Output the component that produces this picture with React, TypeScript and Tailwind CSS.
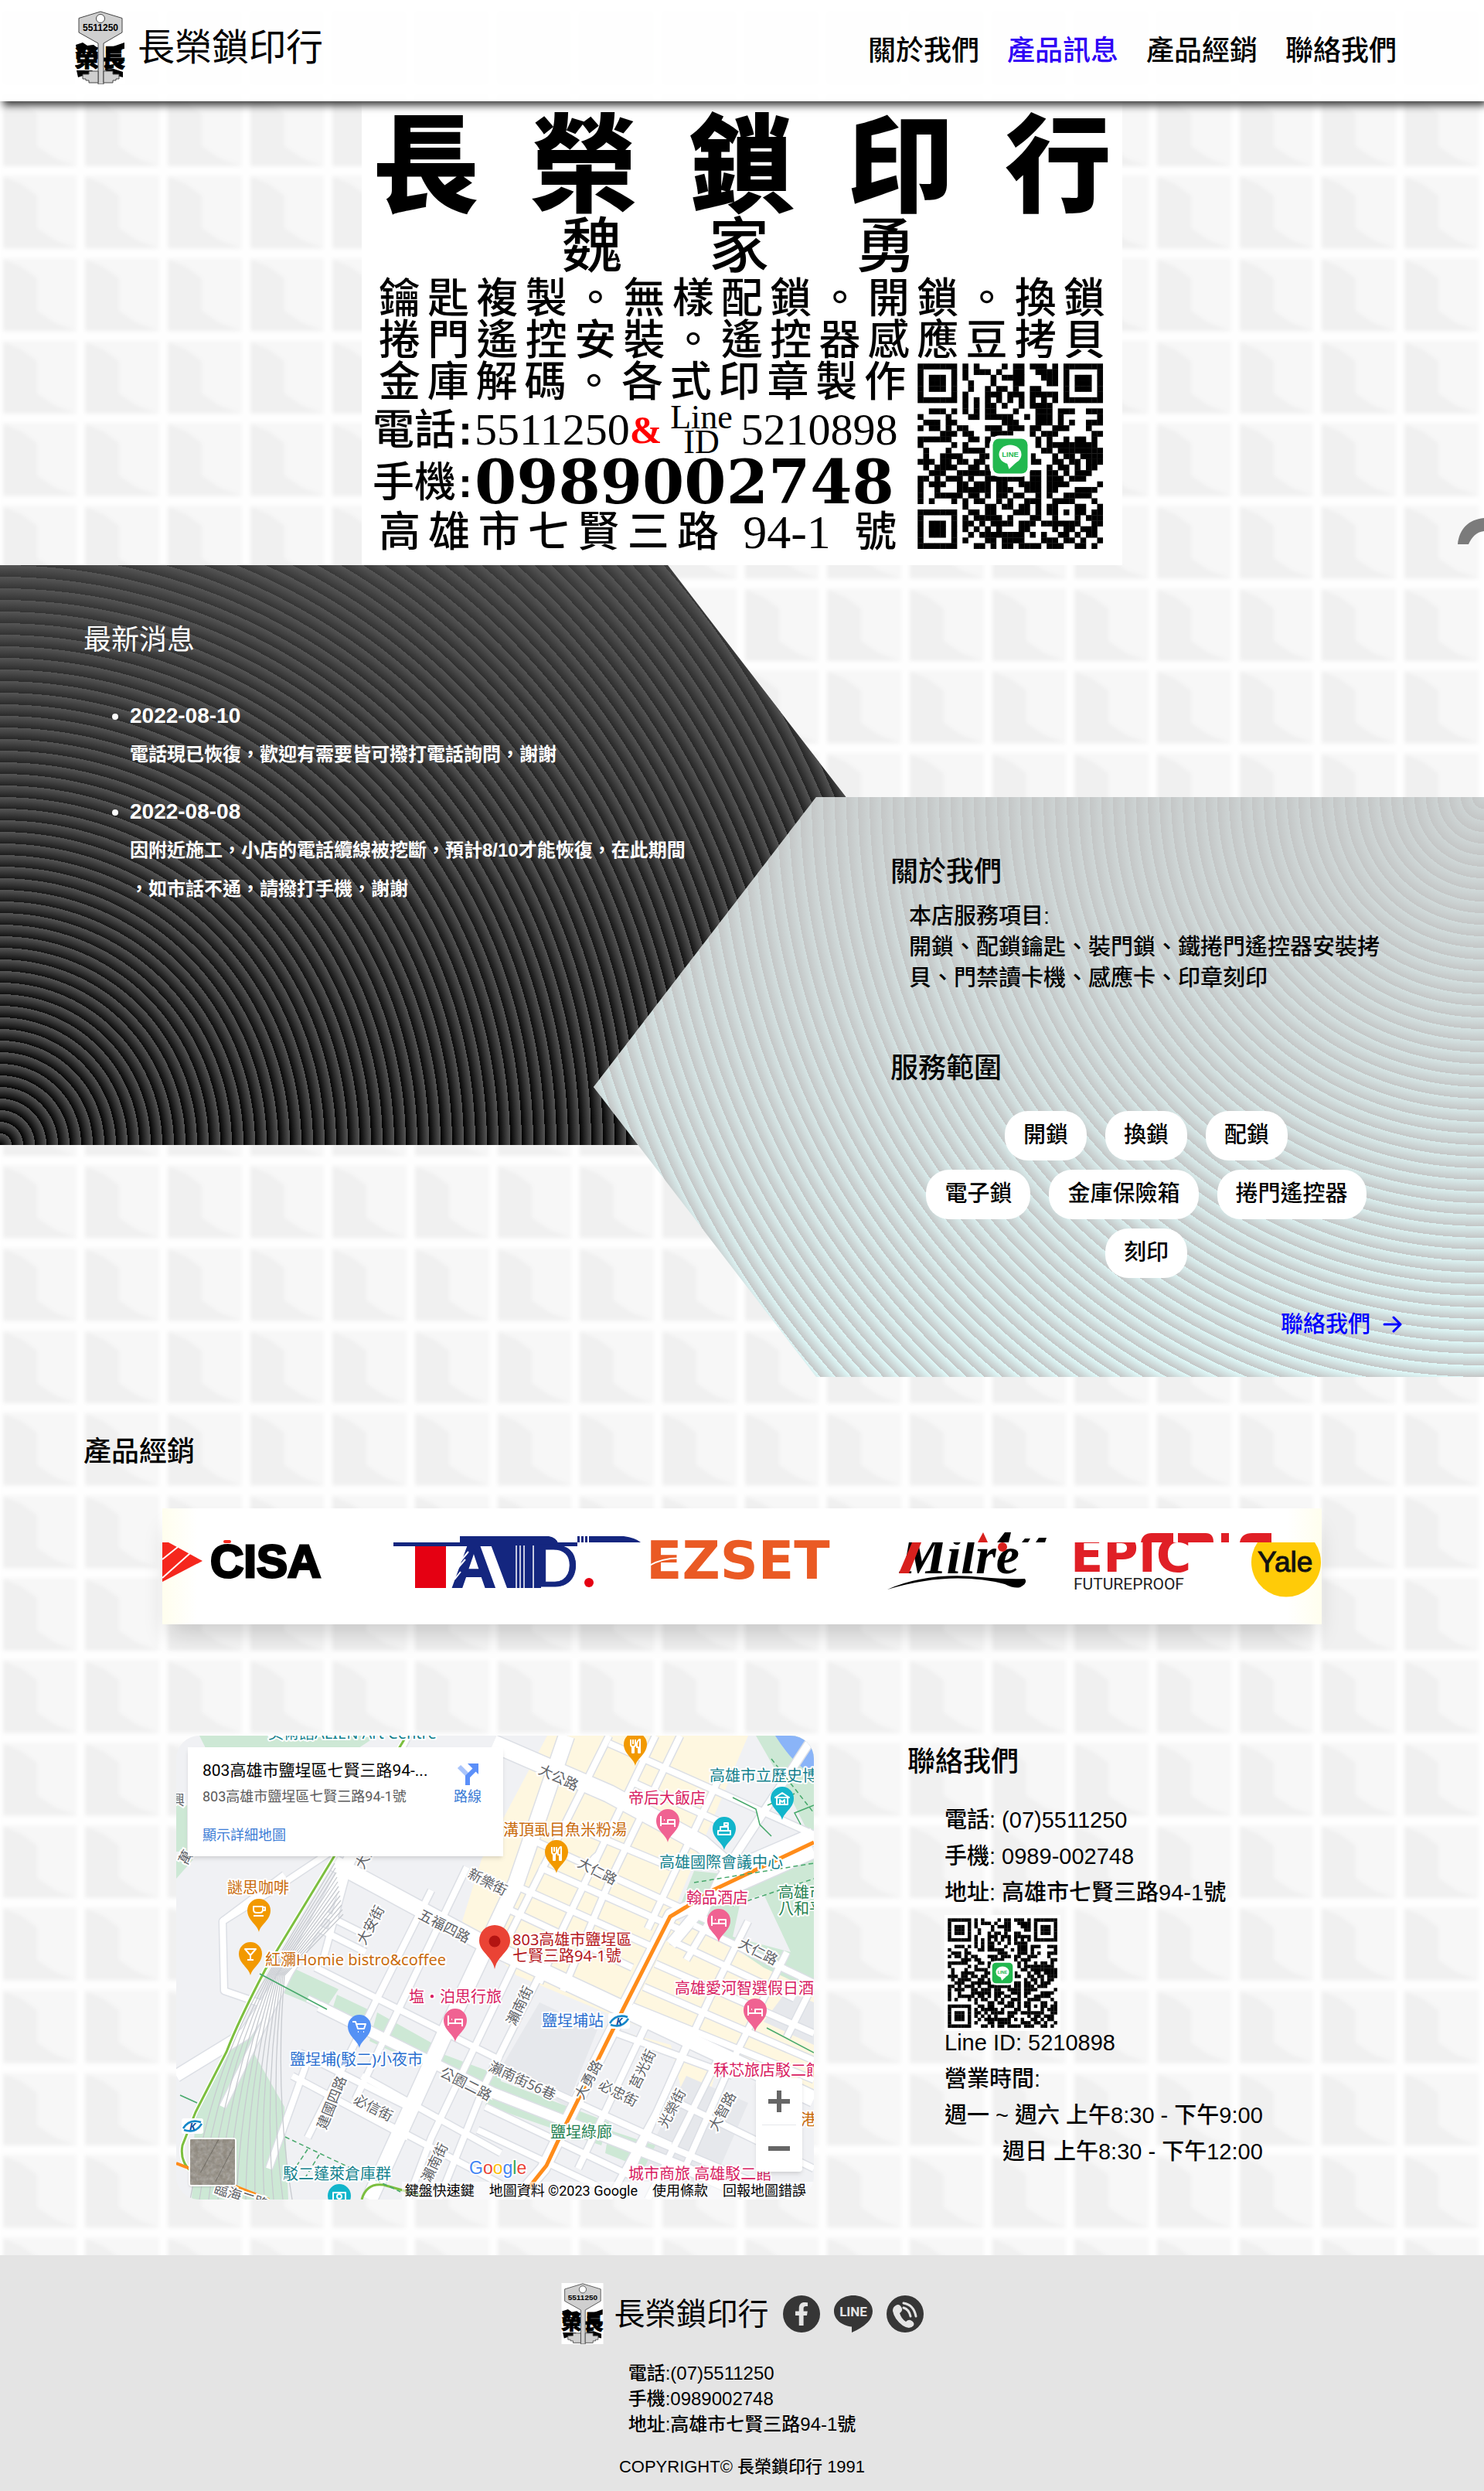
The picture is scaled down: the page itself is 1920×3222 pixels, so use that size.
import React from "react";
import { FaFacebookF } from "react-icons/fa";

const QR_ROWS = [
  "111111101010000101101110101111111",
  "100000101011101001100111101000001",
  "101110101000010111100011101011101",
  "101110100100010001100001101011101",
  "101110100100101101001100001011101",
  "100000101000111011101111101000001",
  "111111101010101010101010101111111",
  "000000001010110100101111000000000",
  "001110101010110001000111011100111",
  "100001000110111110010111010000001",
  "011101100000000111000111010100111",
  "101101011000111011101100111000100",
  "000011101100011110001011100000011",
  "111111000110100000000101001011010",
  "100000101000100000000101111111110",
  "010001001111000000000011011111111",
  "010011110001100000001000101101111",
  "111011011011000000001100110110111",
  "010111100110100000000001011010110",
  "001110011111100000001101101011100",
  "110101110100111111101101110111000",
  "101110011011101100111101111000001",
  "100100011111101110011101100011110",
  "100111110110101101100101001111100",
  "101000101011001010011100111100010",
  "000000001000110110110101100011001",
  "111111100110110001110101101011011",
  "100000101011111010001100100010111",
  "101110101101011110111011111110011",
  "101110101010101000110000101101110",
  "101110100101111111101010011010110",
  "100000101000110111100011101101001",
  "111111100011010110111101110011010",
];

function QrCode({ className }: { className: string }) {
  return (
    <svg viewBox="-1 -1 35 35" className={className} role="img" aria-label="LINE QR code">
      <rect x="-1" y="-1" width="35" height="35" fill="#fff" />
      {QR_ROWS.map((row, y) =>
        row.split("").map((bit, x) =>
          bit === "1" ? <rect key={`${x}-${y}`} x={x} y={y} width="1.04" height="1.04" fill="#000" /> : null
        )
      )}
      <rect x="12.8" y="12.8" width="7.4" height="7.4" rx="1.8" fill="#fff" />
      <rect x="13.4" y="13.4" width="6.2" height="6.2" rx="1.1" fill="#22b84f" />
      <ellipse cx="16.5" cy="16.2" rx="2" ry="1.7" fill="#fff" />
      <path d="M15.9 17.6h1.7l-1.3 1.2z" fill="#fff" />
      <text x="16.5" y="16.7" textAnchor="middle" fontSize="1.3" fontWeight="700" fill="#22b84f">LINE</text>
    </svg>
  );
}

function KeyLogo({ className }: { className: string }) {
  return (
    <svg viewBox="0 0 65 95" className={className} role="img" aria-label="長榮鎖印行">
      <rect width="65" height="95" fill="#fff" />
      <g fill="#000" stroke="#000" strokeWidth="1" fontWeight="900" fontSize="31">
        <text x="0" y="72">榮</text>
        <text x="34" y="72">長</text>
      </g>
      <path d="M1 44l9-3 6 4 8-1 4 3v3H2zM64 41l-20 7-4 4v3l24-6zM2 77h20l6 5-8-1-16 5zM38 76l8 6 16 4v-7l-12-4z" fill="#000" />
      <path d="M33 1 61 9.500V28L37 42V95H30V42L5 28V9.500z" fill="#cfcfcf" stroke="#444" strokeWidth="1" />
      <path d="M30 78H18v4h-8v6h4v2h4v3h12zM37 78h12v4h8v6h-4v2h-4v3H37z" fill="#cfcfcf" stroke="#444" strokeWidth="1" />
      <circle cx="33" cy="10" r="5.500" fill="#fff" stroke="#444" />
      <text x="33" y="26" textAnchor="middle" fontSize="12" fontWeight="700">5511250</text>
    </svg>
  );
}

function TileBackground() {
  const xs = [-2, 104, 211];
  const ys = [8, 115, 221];
  return (
    <svg className="absolute inset-0 -z-10 h-full w-full" aria-hidden="true">
      <defs>
        <filter id="soft" x="0" y="0" width="1" height="1">
          <feGaussianBlur stdDeviation="2.500" />
        </filter>
        <pattern id="tiles" width="320" height="320" patternUnits="userSpaceOnUse">
          <rect width="320" height="320" fill="#f7f7f7" />
          {[-320, 0].map((oy) => ys.map((y) => xs.map((x) => (
            <g key={`${oy}${x}-${y}`} transform={`translate(${x} ${y + oy})`}>
              <path d="M6 7 30 17 50 32V74L74 90 102 100H6z" fill="#f0f0f0" />
              <rect x="-5" y="0" width="11" height="107" fill="#fefefe" />
              <rect x="0" y="-6" width="107" height="12" fill="#fefefe" />
            </g>
          ))))}
          <rect x="313" y="0" width="11" height="320" fill="#fefefe" />
        </pattern>
      </defs>
      <rect width="100%" height="100%" fill="url(#tiles)" filter="url(#soft)" />
    </svg>
  );
}

const NAV = [
  { label: "關於我們", active: false },
  { label: "產品訊息", active: true },
  { label: "產品經銷", active: false },
  { label: "聯絡我們", active: false },
];

function Header() {
  return (
    <header className="relative z-20 flex h-[131px] items-center justify-between bg-white/90 px-[97px] pb-2 shadow-[4px_5px_10px_#333]">
      <a href="#top" className="flex items-center gap-4">
        <KeyLogo className="h-[95px] w-[65px]" />
        <span className="text-5xl font-normal">長榮鎖印行</span>
      </a>
      <nav className="flex gap-9 pt-2 pr-4 text-4xl font-medium">
        {NAV.map((n) => (
          <a key={n.label} href="#top" className={n.active ? "text-[#2e00f5]" : "text-black"}>{n.label}</a>
        ))}
      </nav>
    </header>
  );
}

function Banner() {
  const spread = "text-justify [text-align-last:justify]";
  return (
    <section className="relative">
      <div className="relative mx-auto h-[600px] w-[984px] bg-white px-[22px] pt-1 text-black">
        <div className={`-mx-2 h-[144px] pt-2 text-[138px] leading-[144px] font-black ${spread}`}>長榮鎖印行</div>
        <div className="flex h-[80px] justify-center gap-[112px] pr-2 text-[78px] leading-[80px] font-medium">
          <span>魏</span><span>家</span><span>勇</span>
        </div>
        <div className={`h-[54px] text-[54px] leading-[54px] font-medium ${spread}`}>鑰匙複製。無樣配鎖。開鎖。換鎖</div>
        <div className={`h-[54px] text-[54px] leading-[54px] font-medium ${spread}`}>捲門遙控安裝。遙控器感應豆拷貝</div>
        <div className="flex justify-between">
          <div className="w-[682px]">
            <div className={`h-[54px] text-[54px] leading-[54px] font-medium ${spread}`}>金庫解碼。各式印章製作</div>
            <div className="-ml-2 flex h-[70px] items-center text-[54px] leading-none">
              <span className="font-medium">電話</span>
              <span className="w-[24px] text-center font-bold">:</span>
              <span className="font-[Liberation_Serif] text-[58px]">5511250</span>
              <span className="font-[Liberation_Serif] text-[50px] font-bold text-[#f00]">&amp;</span>
              <span className="flex w-[102px] flex-col items-center font-[Liberation_Serif] text-[44px] leading-[32px]">
                <span>Line</span><span>ID</span>
              </span>
              <span className="font-[Liberation_Serif] text-[58px]">5210898</span>
            </div>
            <div className="-ml-2 flex h-[66px] items-center text-[54px] leading-none">
              <span className="font-medium">手機</span>
              <span className="w-[24px] text-center font-bold">:</span>
              <span className="font-[DejaVu_Serif] text-[78px] font-bold">0989002748</span>
            </div>
            <div className="flex h-[62px] items-center justify-between pr-3 text-[54px] leading-none font-medium">
              <span className={`w-[440px] ${spread}`}>高雄市七賢三路</span>
              <span className="font-[Liberation_Serif] text-[62px] font-normal">94-1</span>
              <span>號</span>
            </div>
          </div>
          <QrCode className="-mt-1 -mr-1 h-[254px] w-[254px]" />
        </div>
      </div>
      <svg viewBox="0 0 34 34" className="absolute right-0 bottom-[27px] h-[34px] w-[34px]" aria-hidden="true">
        <path d="M0 34C2 14 14 2 34 0v17C24 18 18 25 14 34z" fill="#7b7b7b" />
      </svg>
    </section>
  );
}

const NEWS = [
  { date: "2022-08-10", text: "電話現已恢復，歡迎有需要皆可撥打電話詢問，謝謝" },
  { date: "2022-08-08", text: "因附近施工，小店的電話纜線被挖斷，預計8/10才能恢復，在此期間，如市話不通，請撥打手機，謝謝" },
];

function News() {
  return (
    <section className="h-[750px] w-3/5 pt-[70px] pl-[108px] text-white [background-image:repeating-radial-gradient(circle_at_0_100%,transparent_0,#555_15px),linear-gradient(#383838,#000)] [clip-path:polygon(0_0,75%_0,100%_50%,75%_100%,0_100%)]">
      <h2 className="text-4xl leading-[54px] font-normal">最新消息</h2>
      <ul className="mt-[46px] w-[784px] list-disc pl-[60px]">
        {NEWS.map((n) => (
          <li key={n.date} className="mb-6 text-[28px] leading-[50px] font-bold">
            <h3>{n.date}</h3>
            <p className="text-2xl leading-[50px] [line-break:anywhere]">{n.text}</p>
          </li>
        ))}
      </ul>
    </section>
  );
}

const SERVICES = [["開鎖", "換鎖", "配鎖"], ["電子鎖", "金庫保險箱", "捲門遙控器"], ["刻印"]];

function About() {
  return (
    <section className="-mt-[450px] ml-auto flex h-[750px] w-3/5 flex-col pt-[70px] pr-[106px] pl-[384px] text-black [background-image:repeating-radial-gradient(circle_at_100%_0,transparent_0,#c4c6c6_15px),linear-gradient(#cdd3d3,#dffafa)] [clip-path:polygon(25%_0,100%_0,100%_100%,25%_100%,0_50%)]">
      <h2 className="text-4xl leading-[54px] font-medium">關於我們</h2>
      <p className="w-[640px] pt-[10px] pl-6 text-[29px] leading-[40px] font-medium">
        本店服務項目:<br />開鎖、配鎖鑰匙、裝門鎖、鐵捲門遙控器安裝拷貝、門禁讀卡機、感應卡、印章刻印
      </p>
      <h2 className="mt-[70px] text-4xl leading-[54px] font-medium">服務範圍</h2>
      <div className="mt-7 flex flex-col gap-3">
        {SERVICES.map((row) => (
          <ul key={row[0]} className="flex justify-center gap-6">
            {row.map((s) => (
              <li key={s} className="flex h-16 items-center rounded-[30px] bg-white px-6 text-[29px] font-medium">{s}</li>
            ))}
          </ul>
        ))}
      </div>
      <a href="#contact" className="mt-[38px] flex items-center gap-4 self-end text-[29px] leading-[44px] font-medium text-[#0000ff]">
        聯絡我們
        <svg viewBox="0 0 25 22" className="h-[22px] w-[25px]" fill="none" stroke="currentColor" strokeWidth="3" strokeLinecap="round" strokeLinejoin="round" aria-hidden="true">
          <path d="M2 11h21M14 2l9 9-9 9" />
        </svg>
      </a>
    </section>
  );
}

function Brands() {
  return (
    <section className="pt-[70px] pb-[144px]">
      <h2 className="pl-[108px] text-4xl leading-[54px] font-medium text-black">產品經銷</h2>
      <div className="mx-auto mt-[46px] h-[150px] w-[1500px] max-w-full bg-[linear-gradient(90deg,#fffeee,#fff_3%,#fff_97%,#fffeee)] shadow-[0_20px_30px_-8px_rgba(0,0,0,.18)]">
        <svg viewBox="0 0 1500 150" className="h-full w-full" role="img" aria-label="CISA TAID EZSET Milre EPIC Yale">
          <path d="M0 44h8L52 68 0 95z" fill="#f5271d" />
          <path d="M0 66 20 50M0 90 36 58" stroke="#fff" strokeWidth="2" />
          <text x="62" y="89" fontSize="60" fontWeight="700" fontFamily="Liberation Sans" stroke="#000" strokeWidth="3">CISA</text>
          <rect x="79" y="41" width="10" height="4" rx="2" fill="#f5271d" />

          <path d="M299 44H537V49H299z" fill="#14267f" />
          <path d="M385 45v-9H500q10 2 12 9z" fill="#14267f" />
          <path d="M537 36h60q15 2 22 8h-82z" fill="#14267f" />
          <path d="M541 36v8M546 36v8M551 36v8" stroke="#fff" strokeWidth="2" />
          <rect x="327" y="49" width="40" height="54" fill="#e50012" />
          <text x="374" y="102" fontSize="80" fontWeight="700" fontFamily="Liberation Sans" fill="#14267f" stroke="#14267f" strokeWidth="2">A</text>
          <path d="M378 92 386 82M380 80 392 66M386 68 396 56" stroke="#fff" strokeWidth="2" />
          <text x="482" y="101" fontSize="78" fontFamily="Liberation Sans" fill="#14267f" stroke="#14267f">D</text>
          <path d="M425 47H490V103H446z" fill="#14267f" />
          <path d="M458 48v55M463 48v55M468 48v55M480 48v55" stroke="#fff" strokeWidth="1.500" />
          <circle cx="552" cy="96" r="6" fill="#e50012" />

          <text x="626" y="91" fontSize="68" fontWeight="700" fontFamily="DejaVu Sans" fill="#ea5a24">EZSET</text>
          <path d="M630 74q20-12 50-9" fill="none" stroke="#fff" strokeWidth="2" />

          <text x="954" y="84" fontSize="68" fontWeight="700" fontStyle="italic" fontFamily="Liberation Serif">Milre</text>
          <path d="M953 84 970 44h12L966 84z" fill="#d8201d" />
          <path d="M938 105Q990 82 1060 89q34 3 56 2 4 6-6 11-8 2-20-4-70-18-152 7z" />
          <rect x="950" y="30" width="180" height="14" fill="#fff" />
          <circle cx="1087" cy="50" r="6" fill="#d8201d" />
          <path d="M1055 44 1062 31l6 13z" fill="#d8201d" />
          <path d="M1080 44 1090 31h8l-3 13zM1112 44l4-5h7l-3 5zM1130 44l4-6h10l-2 6z" />

          <text x="1175" y="82" fontSize="62" fontWeight="700" fontFamily="DejaVu Sans" fill="#e01f26">EPIC</text>
          <rect x="1170" y="30" width="190" height="14" fill="#fff" />
          <path d="M1266 44q2-12 14-12h28v12zM1314 32h36q10 0 10 12h-46zM1370 32h10v12h-10zM1394 44q2-12 16-12h25v12z" fill="#e01f26" />
          <text x="1179" y="105" fontSize="21" fontFamily="Roboto" fill="#222">FUTUREPROOF</text>
          <path d="M1417 44h74a45 45 0 1 1-74 0z" fill="#ffcb08" />
          <text x="1417" y="82" fontSize="37" fontFamily="Liberation Sans" fill="#111" stroke="#111" strokeWidth="1">Yale</text>
        </svg>
      </div>
    </section>
  );
}

type PinKind = "food" | "bed" | "cup" | "bar" | "cart" | "civic" | "museum" | "camera";
const PIN_ART: Record<PinKind, string> = {
  food: "M-6-34v6q0 3 2 3v8h2v-8q2 0 2-3v-6M-3-34v6M5-34q-4 3-3 10h2v7h2v-17z",
  bed: "M-9-34v13M-9-24H9v4M9-24v-5H0v5M-5-29h1",
  cup: "M-7-33H5v4q0 4-4 4h-4q-4 0-4-4zM5-32h3v4H5M-7-21H6",
  bar: "M-7-34H7L0-26zM0-26v6M-4-20h8",
  cart: "M-9-34h4l3 9H6l2-6H-4M-2-21h1M5-21h1",
  civic: "M-8-20v-5h16v5zM-5-25v-5H5v5M0-30v-5h5v3H0",
  museum: "M-9-29 0-35 9-29zM-7-28v8H7v-8M-3-21v-5l3 3 3-3v5",
  camera: "M-8-32H8v11H-8zM-3-27a3 3 0 1 0 6 0 3 3 0 1 0-6 0",
};
const PINS: { x: number; y: number; c: string; k: PinKind }[] = [
  { x: 107, y: 254, c: "#f29900", k: "cup" },
  { x: 96, y: 310, c: "#f29900", k: "bar" },
  { x: 237, y: 404, c: "#5491f5", k: "cart" },
  { x: 361, y: 396, c: "#f06292", k: "bed" },
  { x: 211, y: 623, c: "#12b5cb", k: "camera" },
  { x: 594, y: 39, c: "#f29900", k: "food" },
  { x: 492, y: 178, c: "#f29900", k: "food" },
  { x: 636, y: 138, c: "#f06292", k: "bed" },
  { x: 709, y: 148, c: "#12b5cb", k: "civic" },
  { x: 784, y: 109, c: "#12b5cb", k: "museum" },
  { x: 702, y: 267, c: "#f06292", k: "bed" },
  { x: 749, y: 383, c: "#f06292", k: "bed" },
];
const ORANGE = "#c96b0b", PINK = "#d81b60", TEAL = "#12808c", BLUE = "#2a6fd0", GREEN = "#1f8050", RED = "#b3151a";
const PLACES: [string, number, number, string][] = [
  ["美術館ALIEN Art Centre", 119, 4, TEAL],
  ["謎思咖啡", 66, 204, ORANGE],
  ["紅瀰Homie bistro&coffee", 115, 297, ORANGE],
  ["塩・泊思行旅", 301, 345, PINK],
  ["鹽埕埔(駁二)小夜市", 147, 426, BLUE],
  ["駁二蓬萊倉庫群", 138, 574, TEAL],
  ["溝頂虱目魚米粉湯", 423, 129, ORANGE],
  ["帝后大飯店", 585, 88, PINK],
  ["高雄市立歷史博物館", 690, 59, TEAL],
  ["高雄國際會議中心", 625, 171, TEAL],
  ["翰品酒店", 660, 217, PINK],
  ["高雄市", 779, 210, GREEN],
  ["八和平", 779, 231, GREEN],
  ["803高雄市鹽埕區", 435, 271, RED],
  ["七賢三路94-1號", 435, 292, RED],
  ["高雄愛河智選假日酒店", 645, 334, PINK],
  ["鹽埕埔站", 473, 376, BLUE],
  ["秝芯旅店駁二館", 695, 440, PINK],
  ["鹽埕綠廊", 484, 520, GREEN],
  ["城市商旅 高雄駁二館", 585, 574, PINK],
  ["港區", 808, 504, ORANGE],
];
const STREETS: [string, number, number, number][] = [
  ["大公路", 492, 60, 25], ["大仁路", 542, 181, 27], ["大仁路", 750, 285, 27], ["新樂街", 400, 195, 27],
  ["五福四路", 344, 252, 27], ["大安街", 257, 248, -62], ["大安街", 255, 150, -62], ["瀨南街", 450, 352, -64],
  ["瀨南街56巷", 445, 452, 25], ["大勇路", 539, 448, -62], ["必忠街", 569, 468, 27], ["莒光街", 609, 434, -64],
  ["光榮街", 647, 485, -62], ["大智路", 712, 489, -62], ["公園二路", 372, 456, 27], ["必信街", 252, 487, 27],
  ["建國四路", 207, 477, -68], ["瀨南街", 340, 555, -64], ["萬", 18, 160, -62], ["興", 2, 90, 0], ["臨海二路", 82, 602, 18],
];
const MINOR = [
  "M300 0 60 480", "M228 150 190 290M170 420 120 560", "M330 200 170 520", "M376 170 232 470", "M440 290 330 520 300 600",
  "M470 310 400 450 340 600", "M560 0 430 260", "M620 0 500 250 470 320", "M652 0 560 190 500 330", "M700 60 610 250",
  "M740 240 690 340 620 490 560 600", "M790 280 720 420 640 600", "M610 370 520 560", "M660 400 590 560", "M700 420 610 600",
  "M560 10 830 130", "M590 60 700 110", "M520 120 640 170", "M450 130 690 240", "M470 170 650 250", "M430 190 620 275",
  "M420 220 590 300", "M640 265 800 340", "M620 295 825 385", "M605 325 825 420", "M590 350 825 445", "M570 385 720 440",
  "M180 300 420 420", "M170 340 400 455", "M160 410 300 480", "M150 440 300 520", "M240 440 420 540", "M230 480 420 580",
  "M420 430 640 530", "M400 480 600 575", "M390 510 560 590", "M640 470 825 560", "M610 520 800 600", "M140 180 60 240 62 330 120 350",
  "M60 240 140 190 200 150", "M670 245 825 320 790 390", "M660 290 690 240", "M545 155q-16 12 4 20", "M190 230 250 260M185 250 245 280",
];
const MAJOR: [string, number][] = [
  ["M205 165 400 270 575 352 825 470", 20], ["M410 10 560 75 680 140 720 175 825 130", 22], ["M505 0 440 190 350 380 250 600", 20],
  ["M825 150 640 232 575 360 475 560 440 600", 16], ["M185 350 410 462 650 556 750 600", 13], ["M0 440 90 385 160 280 230 150", 15],
  ["M720 175 640 270", 14], ["M825 0 700 190 680 235", 10],
];

function MapArt() {
  return (
    <svg viewBox="0 0 825 600" preserveAspectRatio="xMinYMid slice" className="h-full w-full" role="img" aria-label="地圖">
      <rect width="825" height="600" fill="#f0f1f4" />
      <path d="M395 160 480 0H740L640 235 825 330V470L560 360 440 310 370 240z" fill="#fef7e0" />
      <path d="M530 370 700 430 670 530 640 400z" fill="#fef7e0" />
      <path d="M470 345 545 380 505 480 420 430z" fill="#e6e8ec" />
      <path d="M660 440 740 475 690 590 600 560z" fill="#e6e8ec" />
      <path d="M790 330 825 345V400L760 370z" fill="#e6e8ec" />
      <g fill="#cde8d5">
        <path d="M30 0H260L200 40 40 20zM0 90h14v60H0zM0 160h22L0 185z" />
        <path d="M150 300 210 328 192 355 120 325zM208 335 250 355 240 380 200 360zM260 358 335 400 322 428 250 395zM340 410 420 440V470L345 435z" />
        <path d="M415 445 560 500 550 530 400 478zM560 510 620 530 605 560 555 540z" />
        <path d="M120 330 100 410 140 480 145 600H20L25 480 60 420z" />
        <path d="M750 0 825 0V140L790 70zM670 175 720 180 825 150V330L760 300 650 225z" />
      </g>
      <path d="M775 0H825V50Q800 40 775 0z" fill="#8ab4f8" />
      <path d="M730 215 760 205 795 280 720 260z" fill="#f0f1f4" />
      <g fill="none" stroke="#dcdfe5" strokeLinejoin="round">
        {MINOR.map((d) => <path key={d} d={d} strokeWidth="11" />)}
        {MAJOR.map(([d, w]) => <path key={d} d={d} strokeWidth={w + 3} />)}
      </g>
      <g fill="none" stroke="#fff" strokeLinejoin="round">
        {MINOR.map((d) => <path key={d} d={d} strokeWidth="8" />)}
        {MAJOR.map(([d, w]) => <path key={d} d={d} strokeWidth={w} />)}
      </g>
      <g fill="none" stroke="#c7cacf" strokeWidth="1.300">
        {[0, 1, 2, 3, 4, 5, 6, 7, 8, 9, 10, 11].map((i) => (
          <path key={i} d={`M${205 + i} ${165 + i * 6} L${118 + i * 2} 310 Q${50 + i * 7} ${420 + i * 4} ${18 + i * 12} 600`} />
        ))}
      </g>
      <path d="M298 0 202 160 115 303Q80 370 65 409L25 487 8 530Q4 552 22 566" fill="none" stroke="#fff" strokeWidth="6" />
      <path d="M298 0 202 160 115 303Q80 370 65 409L25 487 8 530Q4 552 22 566" fill="none" stroke="#7cbf3f" strokeWidth="3" />
      <path d="M0 553 120 600" stroke="#ff8c1a" strokeWidth="4" />
      <path d="M240 600q6-22 28-19l50 14" fill="none" stroke="#7cbf3f" strokeWidth="3" />
      <path d="M825 138 692 201 659 222 639 234 579 352 502 507 479 556 455 586" fill="none" stroke="#ff8c1a" strokeWidth="5" />
      <g fill="none" stroke="#46a86b" strokeWidth="1.500">
        <path d="M108 308 195 354M764 378 825 410M5 465 27 475M720 80 750 95 755 115 770 130M765 90 800 75M825 90 800 100 808 115" />
        <path d="M141 519 290 590M170 535 150 565M185 542 165 575M770 30 825 100M670 190 825 165M720 220 825 185" strokeDasharray="6 4" />
      </g>
      <g fill="#5f6368" fontSize="18" stroke="#fff" strokeWidth="4" paintOrder="stroke" textAnchor="middle">
        {STREETS.map(([t, x, y, r]) => (
          <text key={`${t}${x}`} transform={`translate(${x} ${y}) rotate(${r})`}>{t}</text>
        ))}
      </g>
      {PINS.map((p) => (
        <g key={`${p.x}-${p.y}`} transform={`translate(${p.x} ${p.y})`}>
          <path d="M0 0C-2-10-15-15-15-28a15 15 0 0 1 30 0C15-15 2-10 0 0z" fill={p.c} />
          <path d={PIN_ART[p.k]} fill="none" stroke="#fff" strokeWidth="2" strokeLinejoin="round" />
        </g>
      ))}
      <path d="M412 302C409 285 392 280 392 265a20 20 0 0 1 40 0C432 280 415 285 412 302z" fill="#ea4335" />
      <circle cx="412" cy="266" r="7.500" fill="#b31412" />
      {[[573, 369], [21, 505]].map(([x, y]) => (
        <g key={x} transform={`translate(${x} ${y})`}>
          <rect x="-14" y="-10" width="28" height="20" rx="3" fill="#fff" />
          <path d="M-12 3Q-4-10 11-5M12-3Q4 10-11 5" fill="none" stroke="#1387c9" strokeWidth="2.500" />
          <text x="0" y="5" textAnchor="middle" fontSize="13" fontWeight="700" fontStyle="italic" fill="#104f9e">K</text>
        </g>
      ))}
      <g fontSize="20" stroke="#fff" strokeWidth="4" paintOrder="stroke" strokeLinejoin="round">
        {PLACES.map(([t, x, y, c]) => <text key={t} x={x} y={y} fill={c}>{t}</text>)}
      </g>
      <text x="379" y="567" fontSize="23" fontWeight="500" stroke="#fff" strokeWidth="3" paintOrder="stroke" fontFamily="Liberation Sans">
        <tspan fill="#4285f4">G</tspan><tspan fill="#ea4335">o</tspan><tspan fill="#fbbc04">o</tspan><tspan fill="#4285f4">g</tspan><tspan fill="#34a853">l</tspan><tspan fill="#ea4335">e</tspan>
      </text>
    </svg>
  );
}

function MapPanel() {
  return (
    <div className="relative h-[600px] w-[825px] min-w-0 overflow-hidden rounded-[30px] font-[Noto_Sans,Noto_Sans_CJK_TC,sans-serif]">
      <MapArt />
      <div className="absolute top-[15px] left-[15px] flex h-[141px] w-[408px] justify-between bg-white py-[15px] pr-7 pl-[19px] font-[Roboto,Noto_Sans_CJK_TC,sans-serif] shadow-md">
        <div>
          <p className="text-[21px] leading-[30px] text-black">803高雄市鹽埕區七賢三路94-...</p>
          <p className="mt-1 text-lg leading-[30px] text-[#5b5b5b]">803高雄市鹽埕區七賢三路94-1號</p>
          <a href="#map" className="mt-5 block text-lg leading-[30px] text-[#3a7bd5]">顯示詳細地圖</a>
        </div>
        <a href="#route" className="flex flex-col items-center pt-[6px] text-lg leading-[30px] text-[#3a7bd5]">
          <svg viewBox="0 0 28 28" className="h-7 w-7" aria-hidden="true">
            <path d="M3 4 14 15" stroke="#a9c4fb" strokeWidth="6" />
            <path d="M14 28V17L23 8" fill="none" stroke="#5b8ff9" strokeWidth="6" />
            <path d="M14 0H28V14z" fill="#5b8ff9" />
          </svg>
          路線
        </a>
      </div>
      <div className="absolute right-[15px] bottom-[36px] flex h-[121px] w-[60px] flex-col divide-y divide-gray-200 rounded-sm bg-white px-2 shadow-md">
        <button aria-label="放大" className="flex flex-1 items-center justify-center">
          <svg viewBox="0 0 28 28" className="h-7 w-7"><path d="M14 0v28M0 14h28" stroke="#666" strokeWidth="6" /></svg>
        </button>
        <button aria-label="縮小" className="flex flex-1 items-center justify-center">
          <svg viewBox="0 0 28 28" className="h-7 w-7"><path d="M0 14h28" stroke="#666" strokeWidth="6" /></svg>
        </button>
      </div>
      <button aria-label="衛星圖" className="absolute bottom-[17px] left-4 h-[63px] w-[62px] rounded-sm border-2 border-white bg-[#857f73] shadow">
        <svg viewBox="0 0 60 60" className="h-full w-full" aria-hidden="true">
          <filter id="ground"><feTurbulence type="fractalNoise" baseFrequency=".18" numOctaves="3" seed="4" /><feColorMatrix type="saturate" values="0" /></filter>
          <rect width="60" height="60" fill="#8d867a" />
          <rect width="60" height="60" filter="url(#ground)" opacity=".6" />
          <path d="M38 0 14 44M58 10 34 56" stroke="#56534c" strokeWidth="1" opacity=".6" />
        </svg>
      </button>
      <div className="absolute right-0 bottom-0 flex h-[23px] items-center gap-[19px] bg-white/60 pr-[10px] pl-1 font-[Roboto,Noto_Sans_CJK_TC,sans-serif] text-[18px] leading-[23px] text-black">
        <button>鍵盤快速鍵</button>
        <span>地圖資料 ©2023 Google</span>
        <a href="#terms">使用條款</a>
        <a href="#report">回報地圖錯誤</a>
      </div>
    </div>
  );
}

function Contact() {
  return (
    <section id="contact" className="flex gap-[121px] pb-[72px] pl-[228px] text-black">
      <MapPanel />
      <div className="shrink-0 pt-[7px]">
        <h2 className="text-4xl leading-[54px] font-medium">聯絡我們</h2>
        <div className="mt-[25px] pl-12 text-[29px] leading-[47px] font-medium whitespace-nowrap">
          <p>電話: (07)5511250</p>
          <p>手機: 0989-002748</p>
          <p>地址: 高雄市七賢三路94-1號</p>
          <QrCode className="mt-[5px] h-[150px] w-[150px]" />
          <p className="-mt-2">Line ID: 5210898</p>
          <p>營業時間:</p>
          <div className="inline-block text-right">
            <p>週一 ~ 週六 上午8:30 - 下午9:00</p>
            <p>週日 上午8:30 - 下午12:00</p>
          </div>
        </div>
      </div>
    </section>
  );
}

function Footer() {
  return (
    <footer className="bg-[#e4e4e4] pt-9 text-black">
      <div className="flex items-center justify-center gap-[18px]">
        <div className="flex items-center gap-[14px]">
          <KeyLogo className="h-[79px] w-[55px]" />
          <span className="text-[40px] leading-none">長榮鎖印行</span>
        </div>
        <a href="#facebook" aria-label="Facebook" className="flex h-12 w-12 items-center justify-center rounded-full bg-[#363636] text-[#e4e4e4]">
          <FaFacebookF size={30} />
        </a>
        <a href="#line" aria-label="LINE">
          <svg viewBox="0 0 50 48" className="h-12 w-[50px]">
            <path d="M25 0C11 0 0 9 0 20.500 0 31 10 39 23 40.500v7.500Q50 36 50 20.500C50 9 39 0 25 0z" fill="#363636" />
            <text x="25" y="27" textAnchor="middle" fontSize="17" fontWeight="700" fontFamily="Roboto" fill="#e4e4e4">LINE</text>
          </svg>
        </a>
        <a href="#phone" aria-label="電話">
          <svg viewBox="0 0 48 48" className="h-12 w-12">
            <circle cx="24" cy="24" r="24" fill="#363636" />
            <path d="M12 13q5-3 8 4 1 3-3 6 2 7 8 11 3-3 6-2 6 3 4 7-5 6-14 0Q10 31 8 20q0-5 4-7z" fill="#e4e4e4" />
            <path d="M22 16q7 2 9 11M22 10q13 2 16 17" fill="none" stroke="#e4e4e4" strokeWidth="3" strokeLinecap="round" />
          </svg>
        </a>
      </div>
      <div className="flex flex-col items-center text-2xl leading-[33px] font-medium">
        <div className="mt-[21px]">
          <p>電話:(07)5511250</p>
          <p>手機:0989002748</p>
          <p>地址:高雄市七賢三路94-1號</p>
        </div>
        <p className="mt-[22px] pb-[15px] text-[22px]">COPYRIGHT© 長榮鎖印行 1991</p>
      </div>
    </footer>
  );
}

export default function App() {
  return (
    <div id="top" lang="zh-TW" className="relative isolate min-h-screen overflow-hidden font-[Liberation_Sans,Noto_Sans_CJK_TC,sans-serif]">
      <TileBackground />
      <Header />
      <main>
        <Banner />
        <News />
        <About />
        <Brands />
        <Contact />
      </main>
      <Footer />
    </div>
  );
}
